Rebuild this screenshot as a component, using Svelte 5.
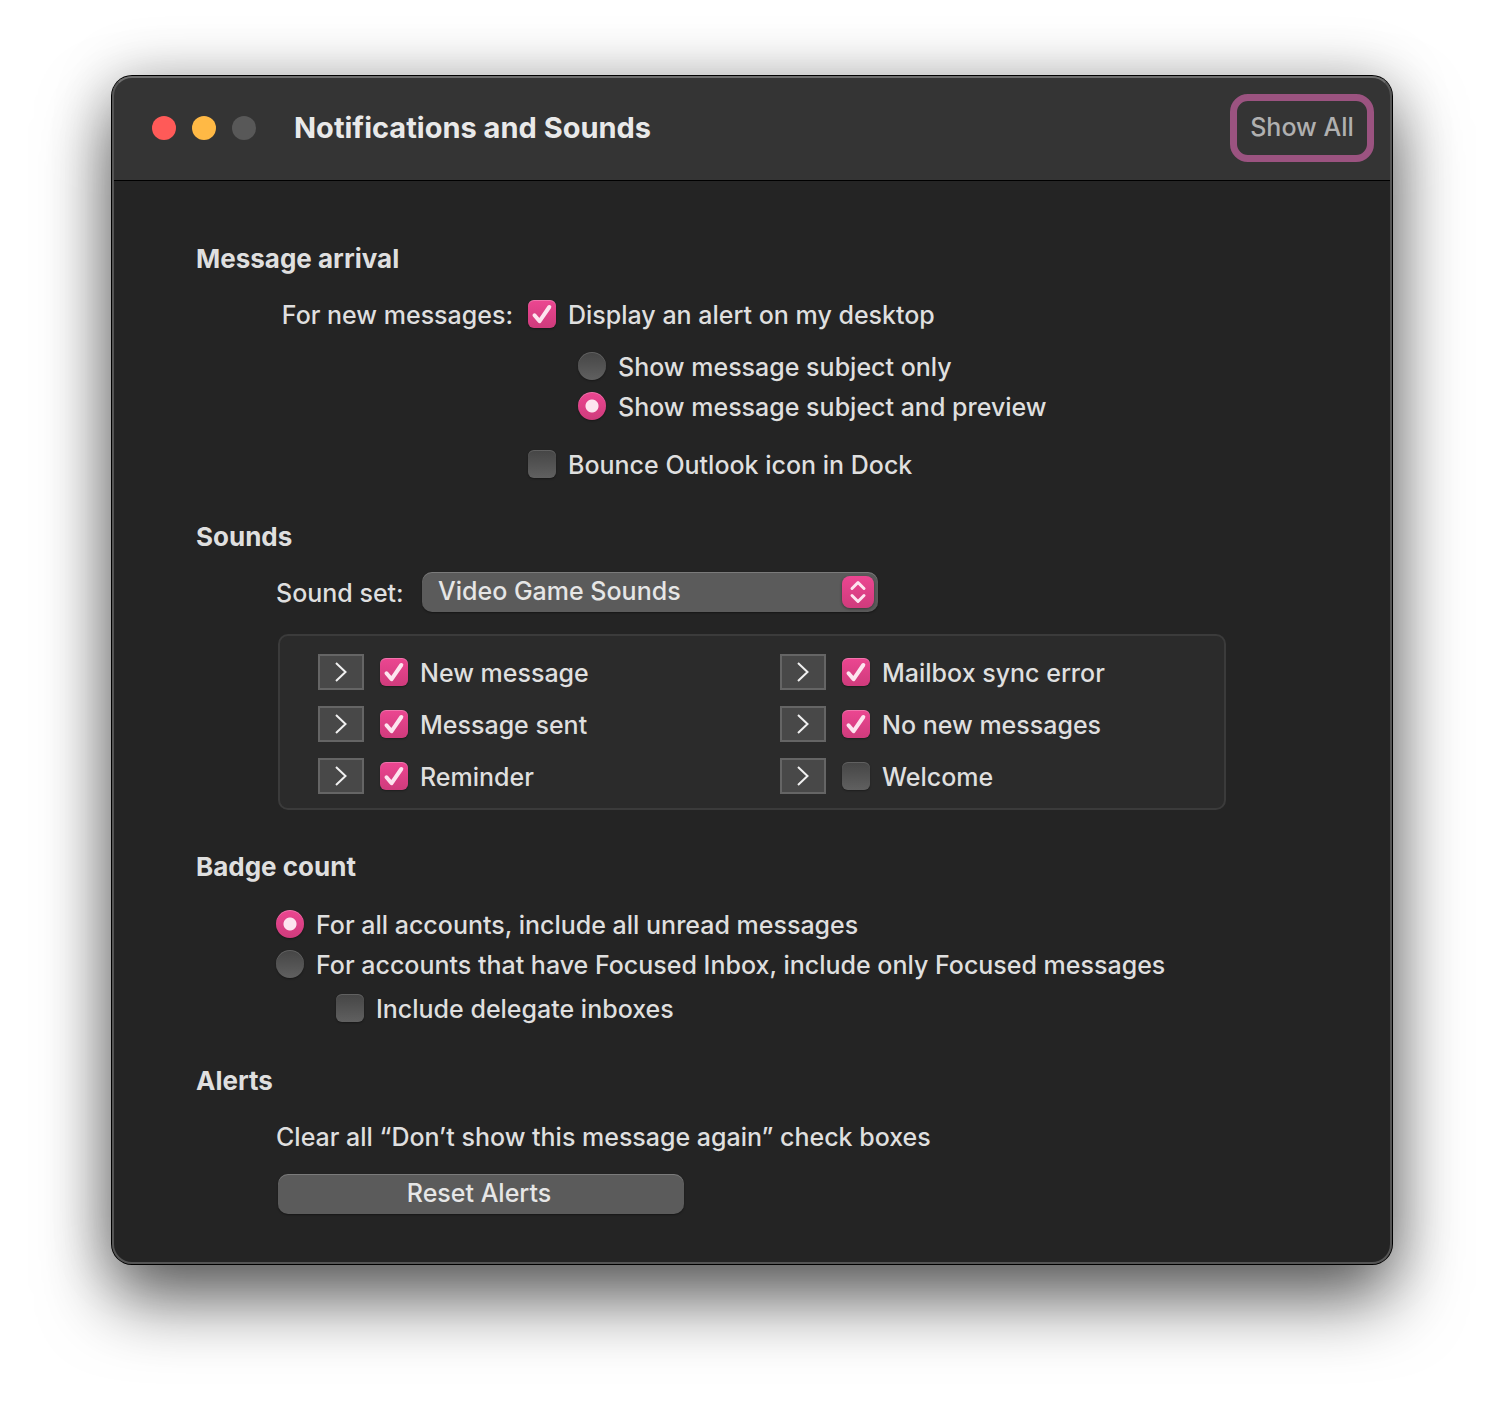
<script>
  let displayAlert = $state(true);
  let preview = $state('full');
  let bounce = $state(false);
  let soundSet = $state('Video Game Sounds');
  let badge = $state('all');
  let delegates = $state(false);
  let sounds = $state([
    { name: 'New message', on: true },
    { name: 'Mailbox sync error', on: true },
    { name: 'Message sent', on: true },
    { name: 'No new messages', on: true },
    { name: 'Reminder', on: true },
    { name: 'Welcome', on: false }
  ]);
</script>

{#snippet checkmark()}
  <svg class="tick" viewBox="0 0 28 28" aria-hidden="true">
    <path d="M6.5 15.3 L11.6 21.2 L21.3 7" />
  </svg>
{/snippet}

<main class="window">
  <header class="titlebar">
    <div class="lights">
      <button class="light close" aria-label="Close"></button>
      <button class="light minimize" aria-label="Minimize"></button>
      <button class="light zoom" aria-label="Zoom" disabled></button>
    </div>
    <h1>Notifications and Sounds</h1>
    <button class="show-all">Show All</button>
  </header>

  <div class="content">
    <section>
      <h2>Message arrival</h2>
      <div class="arrival">
        <span class="caption" id="arrival-caption">For new messages:</span>
        <div class="options" role="group" aria-labelledby="arrival-caption">
          <label class="item">
            <span class="box"><input type="checkbox" bind:checked={displayAlert} />{@render checkmark()}</span>
            Display an alert on my desktop
          </label>
          <div class="radios nested">
            <label class="item">
              <input type="radio" name="preview" value="subject" bind:group={preview} />
              Show message subject only
            </label>
            <label class="item">
              <input type="radio" name="preview" value="full" bind:group={preview} />
              Show message subject and preview
            </label>
          </div>
          <label class="item">
            <span class="box"><input type="checkbox" bind:checked={bounce} />{@render checkmark()}</span>
            Bounce Outlook icon in Dock
          </label>
        </div>
      </div>
    </section>

    <section class="sounds">
      <h2>Sounds</h2>
      <div class="sound-set">
        <label for="sound-set">Sound set:</label>
        <div class="select">
          <select id="sound-set" bind:value={soundSet}>
            <option>Video Game Sounds</option>
          </select>
          <svg class="stepper" viewBox="0 0 32 32" aria-hidden="true">
            <path d="M10 12.5 L16 6.5 L22 12.5 M10 19.5 L16 25.5 L22 19.5" />
          </svg>
        </div>
      </div>
      <div class="panel">
        {#each sounds as sound}
          <div class="sound">
            <button class="play" aria-label={'Play ' + sound.name}>
              <svg viewBox="0 0 12 20" aria-hidden="true"><path d="M1 1 L10.5 10 L1 19" /></svg>
            </button>
            <label class="item">
              <span class="box"><input type="checkbox" bind:checked={sound.on} />{@render checkmark()}</span>
              {sound.name}
            </label>
          </div>
        {/each}
      </div>
    </section>

    <section class="badge">
      <h2>Badge count</h2>
      <div class="radios">
        <label class="item">
          <input type="radio" name="badge" value="all" bind:group={badge} />
          For all accounts, include all unread messages
        </label>
        <label class="item">
          <input type="radio" name="badge" value="focused" bind:group={badge} />
          For accounts that have Focused Inbox, include only Focused messages
        </label>
      </div>
      <label class="item delegate">
        <span class="box"><input type="checkbox" bind:checked={delegates} />{@render checkmark()}</span>
        Include delegate inboxes
      </label>
    </section>

    <section class="alerts">
      <h2>Alerts</h2>
      <p>Clear all “Don’t show this message again” check boxes</p>
      <button class="reset">Reset Alerts</button>
    </section>
  </div>
</main>

<style>
  :global(body) {
    background: #fff;
  }

  :global(#app) {
    display: flow-root;
  }

  .window,
  .window * {
    box-sizing: border-box;
  }

  .window {
    margin: 76px 112px 148px;
    border-radius: 20px;
    background: #242424;
    color: #dfdfdf;
    font: 500 25px/32px Inter, 'Liberation Sans', sans-serif;
    position: relative;
    box-shadow:
      0 0 0 1px #000,
      0 0 60px rgba(0, 0, 0, 0.22),
      0 36px 70px rgba(0, 0, 0, 0.6);
  }

  /* light rim along the window edge */
  .window::after {
    content: '';
    position: absolute;
    inset: 0;
    border: 2px solid #555;
    border-top-color: #6e6e6e;
    border-radius: inherit;
    pointer-events: none;
  }

  button,
  select {
    margin: 0;
    padding: 0;
    border: 0;
    font: inherit;
    color: inherit;
  }

  h1,
  h2,
  p {
    margin: 0;
  }

  .titlebar {
    display: flex;
    align-items: center;
    height: 105px;
    padding: 0 18px 0 40px;
    border-bottom: 1px solid #000;
    border-radius: 20px 20px 0 0;
    background: #343434;
  }

  .lights {
    display: flex;
    gap: 16px;
  }

  .light {
    width: 24px;
    height: 24px;
    border-radius: 50%;
  }

  .close {
    background: #ff5a58;
  }

  .minimize {
    background: #ffb945;
  }

  .zoom {
    background: #585858;
  }

  h1 {
    margin-left: 38px;
    font-size: 29px;
    line-height: 36px;
    font-weight: 700;
    color: #e9e9e9;
  }

  .show-all {
    margin-left: auto;
    width: 144px;
    height: 68px;
    padding-bottom: 2px;
    border: 7px solid #9b5380;
    border-radius: 18px;
    background: #343434;
    color: #b0b0b0;
    white-space: nowrap;
  }

  .content {
    padding: 61px 166px 50px 84px;
  }

  section + section {
    margin-top: 40px;
  }

  h2 {
    font-size: 26px;
    line-height: 34px;
    height: 32px;
    font-weight: 700;
  }

  .item {
    display: flex;
    align-items: center;
    gap: 12px;
    width: fit-content;
    height: 34px;
    margin-bottom: -2px;
    line-height: 34px;
  }

  .arrival {
    display: flex;
    gap: 15px;
    margin-top: 24px;
    padding-left: 80px;
  }

  .caption {
    width: 237px;
    text-align: right;
    white-space: nowrap;
    line-height: 34px;
  }

  .options {
    display: flex;
    flex-direction: column;
  }

  .radios {
    display: flex;
    flex-direction: column;
    gap: 8px;
  }

  .nested {
    margin: 20px 0 26px;
    padding-left: 50px;
  }

  input {
    appearance: none;
    display: block;
    flex: none;
    width: 28px;
    height: 28px;
    margin: 0;
    background: linear-gradient(#454545, #606060);
    box-shadow:
      inset 0 1px 0 rgba(255, 255, 255, 0.15),
      0 1px 2px rgba(0, 0, 0, 0.35);
  }

  input[type='checkbox'] {
    border-radius: 6px;
  }

  input[type='radio'] {
    border-radius: 50%;
  }

  input:checked {
    background: linear-gradient(#ec4691, #cf3b7c);
    box-shadow:
      inset 0 1px 0 rgba(255, 255, 255, 0.25),
      0 1px 2px rgba(0, 0, 0, 0.35);
  }

  input[type='radio']:checked {
    background:
      radial-gradient(circle, #fde4ef 0 6px, transparent 7px),
      linear-gradient(#ec4691, #cf3b7c);
  }

  .item > .box,
  .item > input {
    margin-bottom: 2px;
  }

  .box {
    display: grid;
    flex: none;
  }

  .box > * {
    grid-area: 1 / 1;
  }

  .tick {
    width: 28px;
    height: 28px;
    visibility: hidden;
    fill: none;
    stroke: #fde4ef;
    stroke-width: 4;
    stroke-linecap: round;
    stroke-linejoin: round;
    pointer-events: none;
  }

  .box input:checked + .tick {
    visibility: visible;
  }

  .sound-set {
    display: flex;
    align-items: center;
    gap: 16px;
    margin-top: 20px;
    padding-left: 80px;
  }

  .sound-set label {
    width: 130px;
    padding-top: 2px;
    white-space: nowrap;
    line-height: 34px;
  }

  .select {
    position: relative;
    width: 456px;
  }

  select {
    appearance: none;
    display: block;
    width: 100%;
    height: 40px;
    padding: 0 48px 2px 16px;
    border-radius: 10px;
    background: #5b5b5b;
    color: #e6e6e6;
    box-shadow:
      inset 0 1px 0 rgba(255, 255, 255, 0.2),
      0 1px 2px rgba(0, 0, 0, 0.4);
  }

  .stepper {
    position: absolute;
    top: 4px;
    right: 4px;
    width: 32px;
    height: 32px;
    border-radius: 8px;
    background: linear-gradient(#ec4691, #cf3b7c);
    box-shadow: 0 1px 3px rgba(0, 0, 0, 0.4);
    fill: none;
    stroke: #fde4ef;
    stroke-width: 3;
    stroke-linecap: round;
    stroke-linejoin: round;
    pointer-events: none;
  }

  .panel {
    display: grid;
    grid-template-columns: 1fr 1fr;
    gap: 16px 18px;
    margin: 22px 0 0 82px;
    padding: 18px 0 14px 38px;
    border: 2px solid #3b3b3b;
    border-radius: 10px;
    background: #2b2b2b;
  }

  .sound {
    display: flex;
    align-items: center;
    gap: 16px;
  }

  .play {
    display: grid;
    place-items: center;
    width: 46px;
    height: 36px;
    border: 2px solid #656565;
    background: #484848;
  }

  .play svg {
    width: 12px;
    height: 20px;
    fill: none;
    stroke: #f0f0f0;
    stroke-width: 2;
  }

  .badge .radios {
    margin-top: 26px;
    padding-left: 80px;
  }

  .delegate {
    margin: 12px 0 -2px 140px;
  }

  .alerts p {
    margin: 24px 0 0 80px;
    line-height: 34px;
    height: 32px;
  }

  .reset {
    display: block;
    width: 406px;
    height: 40px;
    margin: 22px 0 0 82px;
    padding: 0 4px 2px 0;
    border-radius: 10px;
    background: #5b5b5b;
    color: #e6e6e6;
    box-shadow:
      inset 0 1px 0 rgba(255, 255, 255, 0.2),
      0 1px 2px rgba(0, 0, 0, 0.4);
  }
</style>
